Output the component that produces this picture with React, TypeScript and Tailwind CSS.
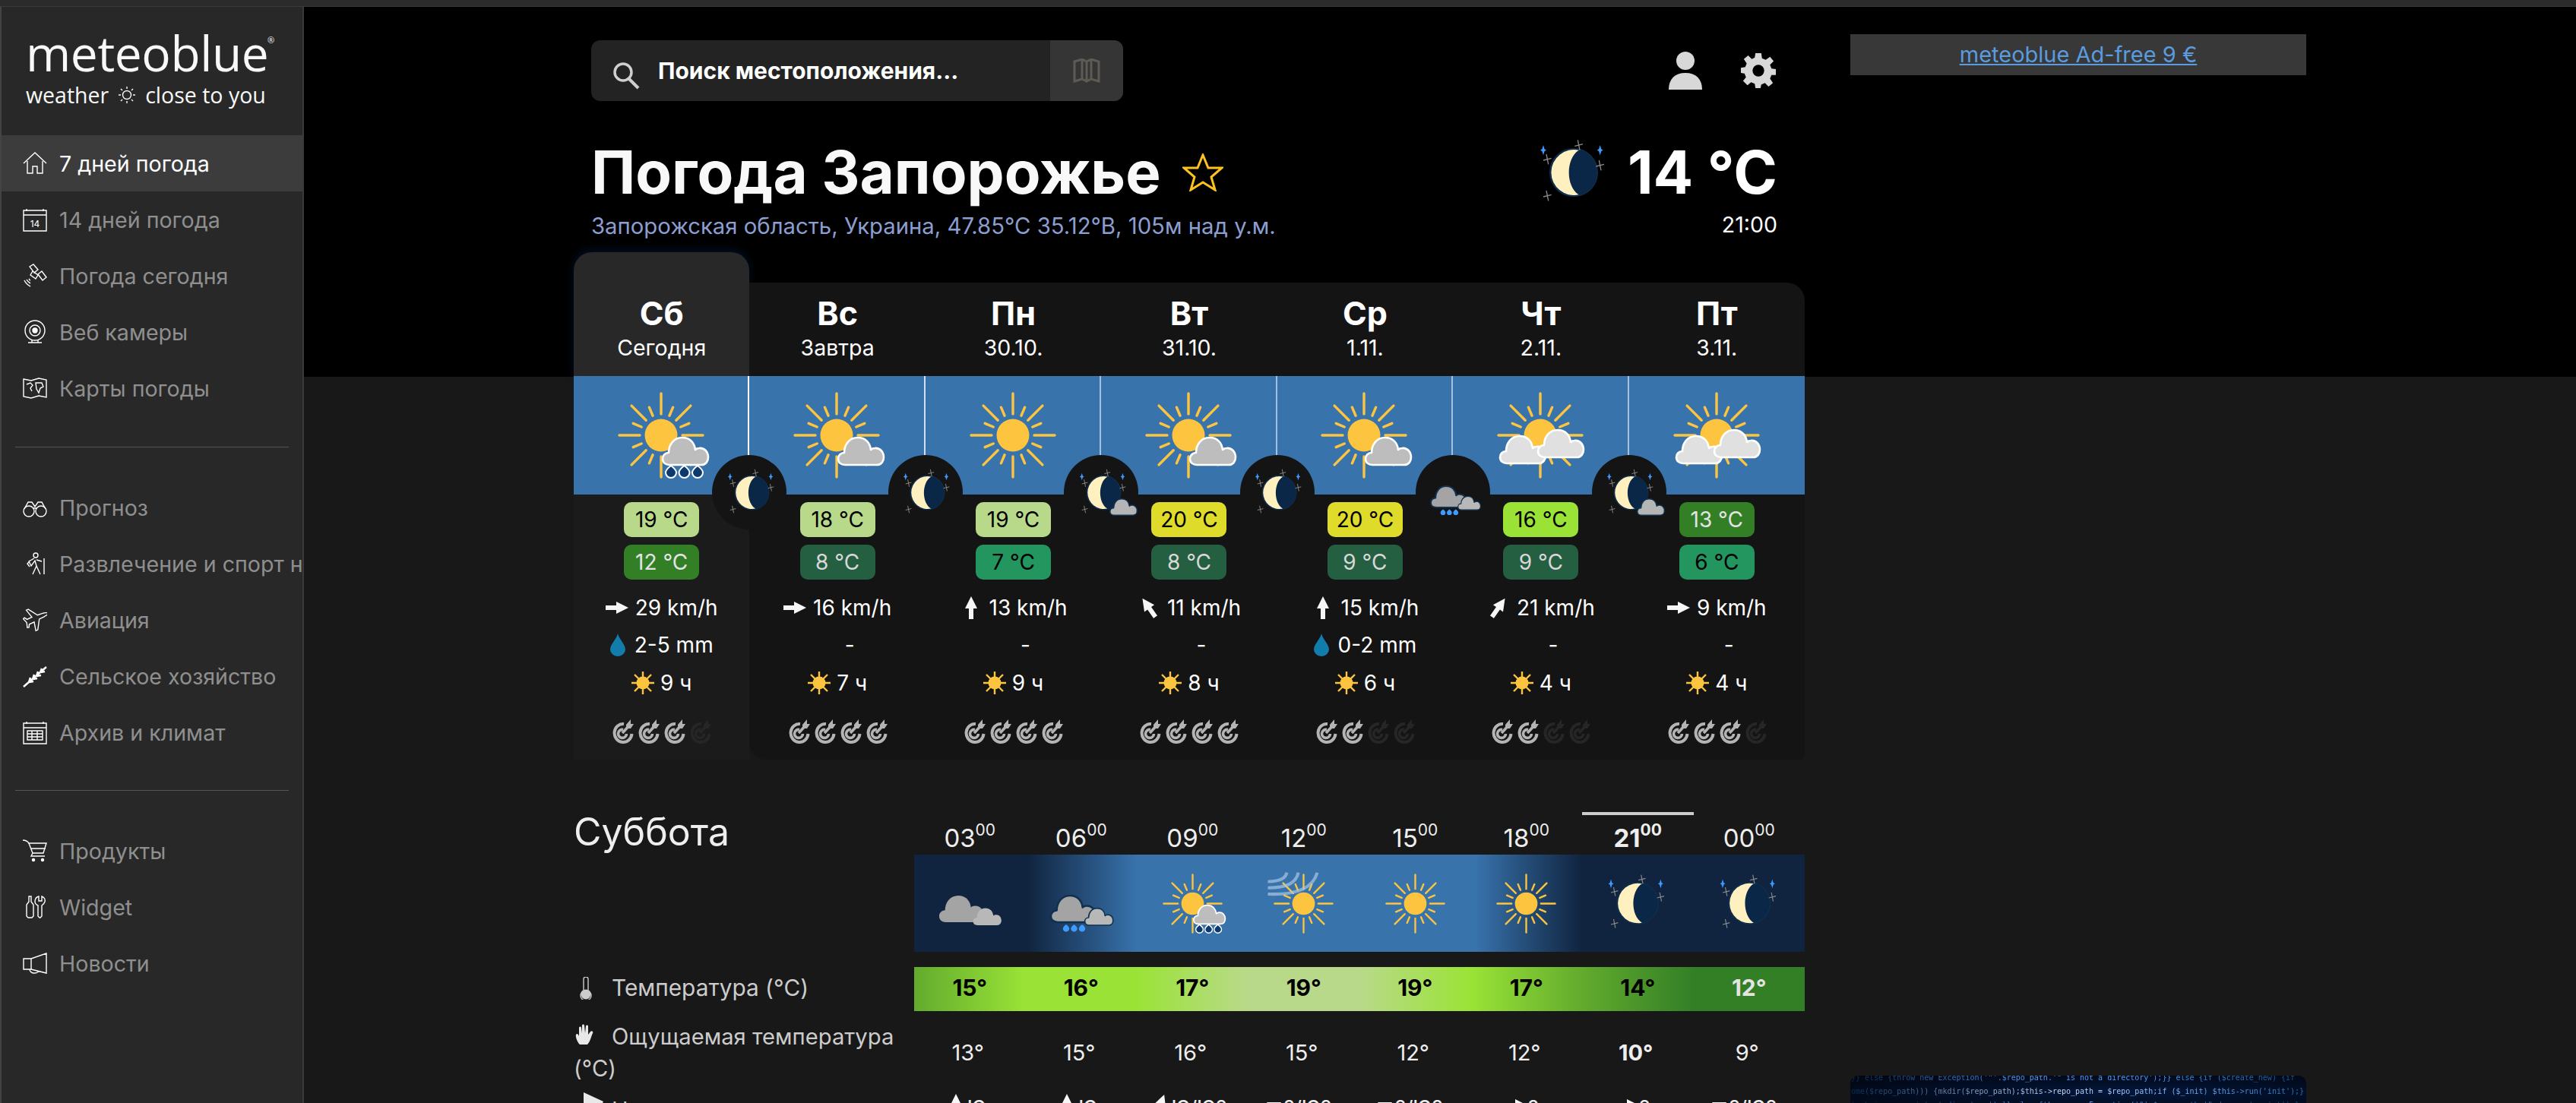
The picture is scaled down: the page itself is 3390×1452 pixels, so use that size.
import type { ReactNode } from 'react';

const FONT = "font-['Inter','Noto_Sans',sans-serif]";

// --- sidebar icons, thin white line drawings on a 32x32 box ---
const navIcons: Record<string, ReactNode> = {
  home: <path d="M1 16 16 2l15 14M6 13v16h7v-9h6v9h7V13" />,
  cal14: (
    <>
      <path d="M1 4h30v27H1zM1 10h30M5 2v3M27 2v3" />
      <text x="16" y="26" fontSize="12" textAnchor="middle" fill="#fff" stroke="none" fontFamily="Inter">14</text>
    </>
  ),
  satellite: <path d="M9 4l5-3 6 7-5 4zM20 14l5-4 6 8-5 4zM13 10l7 5-3 5-7-5zM2 22c2 4 4 6 8 8M5 21c1 2 3 4 5 5M8 20c1 1 1 2 2 2" />,
  webcam: (
    <>
      <circle cx="16" cy="14" r="13" />
      <circle cx="16" cy="14" r="7" />
      <circle cx="16" cy="14" r="3" fill="#fff" />
      <path d="M7 30h18M12 27v3M20 27v3" />
    </>
  ),
  map: <path d="M1 4l10 2 10-3 10 2v23l-10-2-10 3-10-2zM5 11l5-2 3 3-3 4 2 4M17 9l8 0 2 5-4 2-2 6-3-5z" />,
  binoculars: (
    <>
      <circle cx="8" cy="21" r="7" />
      <circle cx="24" cy="21" r="7" />
      <path d="M2 18 7 9h5l4 6 4-6h5l5 9M13 17h6" />
    </>
  ),
  hiker: (
    <>
      <circle cx="17" cy="5" r="3" />
      <path d="M15 9l-7 4 3 6 5-7 2 7-5 11M18 19l5 11M18 11l7 2M28 9v21M9 13l-3 3 3 4" />
    </>
  ),
  plane: <path d="M31 2c-3-1-7 1-9 3L17 9 3 6 1 8l10 6-5 5-4-1-1 2 6 3 3 6 2-1-1-4 5-5 6 10 2-2-3-14 5-5c2-3 5-6 5-8z" transform="rotate(20 16 16)" />,
  wheat: <path d="M1 30 31 4M8 24l2-6M8 24l6-1M13 20l2-6M13 20l6-1M18 16l2-6M18 16l6-1M23 11l2-5M23 11l6-1" strokeWidth="2.5" />,
  table: <path d="M1 4h30v27H1zM1 10h30M5 2v3M27 2v3M6 14h20v12H6zM6 18h20M6 22h20M12 14v12M19 14v12" />,
  cart: (
    <>
      <path d="M0 2c4 0 6 1 8 4l5 13h14l4-13H7M10 13h20M13 19l-2 4h18" />
      <circle cx="14" cy="28" r="1.5" fill="#fff" />
      <circle cx="26" cy="28" r="1.5" fill="#fff" />
    </>
  ),
  tools: <path d="M8 2h3v7l3 4v15l-2 2H7l-2-2V13l3-4zM21 2v6h4V2c3 1 5 4 4 7s-3 4-4 5v14l-2 2h-1l-2-2V14c-2-1-4-3-4-5s1-6 5-7z" />,
  megaphone: <path d="M1 10h10l20-7v26l-20-5H1zM11 10v14M9 24c0 3 3 5 6 5s5-1 6-3" />,
};

function NavIcon({ name }: { name: string }) {
  return (
    <svg viewBox="0 0 32 32" className="h-[32px] w-[32px] shrink-0" fill="none" stroke="#fff" strokeWidth="1.4">
      {navIcons[name]}
    </svg>
  );
}

function NavItem({ icon, label, active }: { icon: string; label: string; active?: boolean }) {
  return (
    <div
      className={`flex h-[74px] items-center gap-[16px] overflow-hidden whitespace-nowrap pl-[28px] text-[28.6px] ${
        active ? 'bg-[#3c3c3c] text-white' : 'text-[#8f8f8f]'
      }`}
    >
      <NavIcon name={icon} />
      <span className="pt-[2px]">{label}</span>
    </div>
  );
}

function Sidebar() {
  return (
    <aside className={`h-full w-[400px] shrink-0 overflow-hidden border-r-2 border-l-2 border-r-[#3a3a3a] border-l-[#444444] bg-[#282828] ${FONT}`}>
      <div className="relative h-[169px] pl-[32px] pt-[25px] font-['Open_Sans',sans-serif] text-[#f8f8f8]">
        <div className="text-[64px] font-medium leading-[71px] tracking-[-0.4px]">meteoblue</div>
        <span className="absolute left-[350px] top-[36px] text-[11px]">®</span>
        <div className="flex items-center whitespace-nowrap text-[28.5px] leading-[40px]">
          weather
          <svg viewBox="-12 -12 24 24" className="mx-[12px] h-[24px] w-[24px]" fill="none" stroke="#f8f8f8" strokeWidth="1.4">
            <circle r="5.5" />
            <path d="M0-11v3M0 8v3M-11 0h3M8 0h3M-8-8l2 2M6 6l2 2M-8 8l2-2M6-6l2-2" />
          </svg>
          close to you
        </div>
      </div>
      <NavItem icon="home" label="7 дней погода" active />
      <NavItem icon="cal14" label="14 дней погода" />
      <NavItem icon="satellite" label="Погода сегодня" />
      <NavItem icon="webcam" label="Веб камеры" />
      <NavItem icon="map" label="Карты погоды" />
      <div className="mx-[18px] mb-[42px] mt-[40px] h-px bg-[#555555]" />
      <NavItem icon="binoculars" label="Прогноз" />
      <NavItem icon="hiker" label="Развлечение и спорт на открытом воздухе" />
      <NavItem icon="plane" label="Авиация" />
      <NavItem icon="wheat" label="Сельское хозяйство" />
      <NavItem icon="table" label="Архив и климат" />
      <div className="mx-[18px] mb-[42px] mt-[39px] h-px bg-[#555555]" />
      <NavItem icon="cart" label="Продукты" />
      <NavItem icon="tools" label="Widget" />
      <NavItem icon="megaphone" label="Новости" />
    </aside>
  );
}

// --- weather pictograms, all on a -60..60 canvas ---
const CLOUD = 'M10 37H52C58 37 61 32 61 27C61 20 56 14 49 15C47 15 45 16 44 17C43 8 37 1 27 1C16 1 9 10 9 21C4 21 1 25 1 29C1 34 5 37 10 37Z';

function Sun() {
  const long = [0, 90, 180, 270];
  const diag = [45, 135, 225, 315];
  const short = [23, 67, 113, 157, 203, 247, 293, 337];
  return (
    <g stroke="#fdc53f" strokeWidth="3.4" strokeLinecap="round">
      {long.map((a) => (
        <line key={a} x1="0" y1="-28" x2="0" y2="-55" transform={`rotate(${a})`} />
      ))}
      {diag.map((a) => (
        <line key={a} x1="0" y1="-28" x2="0" y2="-55" transform={`rotate(${a})`} />
      ))}
      {short.map((a) => (
        <line key={a} x1="0" y1="-28" x2="0" y2="-40" transform={`rotate(${a})`} />
      ))}
      <circle r="21.5" fill="#fdc53f" stroke="none" />
    </g>
  );
}

function Cloud({ x, y, s = 1, fill = '#bdbdbd', stroke = '#fff' }: { x: number; y: number; s?: number; fill?: string; stroke?: string }) {
  return (
    <path
      d={CLOUD}
      transform={`translate(${x} ${y}) scale(${s})`}
      fill={fill}
      stroke={stroke}
      strokeWidth={stroke === 'none' ? 0 : 2.6}
      strokeLinejoin="round"
    />
  );
}

function Drops({ x, y, fill = '#0d3a6e', stroke = '#fff', s = 1 }: { x: number; y: number; fill?: string; stroke?: string; s?: number }) {
  return (
    <g transform={`translate(${x} ${y}) scale(${s})`} fill={fill} stroke={stroke} strokeWidth="2">
      {[0, 17.5, 35].map((dx) => (
        <path key={dx} d={`M${dx} 0C${dx + 4} 3 ${dx + 7} 6 ${dx + 7} 9A7 7 0 0 1 ${dx - 7} 9C${dx - 7} 6 ${dx - 4} 3 ${dx} 0Z`} />
      ))}
    </g>
  );
}

function Stars() {
  const gray = [
    [5, -27],
    [-26, -13],
    [26, -7],
    [-26, 23],
  ];
  const blue = [
    [-30, -22],
    [26, -22],
  ];
  return (
    <g>
      {gray.map(([x, y]) => (
        <path key={`${x}${y}`} d="M-1-5 1 5M-4 1 4-1" transform={`translate(${x} ${y})`} stroke="#8a8a8a" strokeWidth="1" />
      ))}
      {blue.map(([x, y]) => (
        <path key={`${x}${y}`} d="M0-5 1.2-1 3 0 1.2 1 0 5-1.2 1-3 0-1.2-1Z" transform={`translate(${x} ${y})`} fill="#3f9bff" />
      ))}
    </g>
  );
}

function Moon() {
  return (
    <g>
      <circle r="23.5" fill="#0a2747" stroke="#10304f" strokeWidth="1" />
      <path d="M5-22A22.5 22.5 0 1 0 5 22C-8 14-8-14 5-22Z" fill="#fff0c0" />
      <Stars />
    </g>
  );
}

type IconKind = 'sun' | 'sunCloud' | 'sunRain' | 'sunClouds' | 'sunWind' | 'moon' | 'moonCloud' | 'nightRain' | 'nightClouds' | 'nightCloudsRain';

function WeatherIcon({ kind, size }: { kind: IconKind; size: number }) {
  return (
    <svg viewBox="-60 -60 120 120" width={size} height={size} className="block overflow-visible">
      {kind.startsWith('sun') && <Sun />}
      {(kind === 'sunCloud' || kind === 'sunRain') && <Cloud x={1} y={2} />}
      {kind === 'sunRain' && <Drops x={13} y={40} />}
      {kind === 'sunClouds' && (
        <>
          <Cloud x={-54} y={0} fill="#e0e0e0" />
          <Cloud x={-4} y={-8} fill="#e0e0e0" />
        </>
      )}
      {kind === 'sunWind' && (
        <path d="M-68-42C-44-42-34-48-32-59M-68-30C-30-30-14-40-10-59M-68-18C-14-16 18-30 26-59" fill="none" stroke="#a9c6e2" strokeWidth="6" opacity="0.7" />
      )}
      {kind.startsWith('moon') && <Moon />}
      {kind === 'moonCloud' && <Cloud x={8} y={8} s={0.62} fill="#b5b5b5" stroke="#10304f" />}
      {kind.startsWith('night') && (
        <>
          <Cloud x={-41} y={-11} s={0.97} fill="#a4a4a4" stroke={kind === 'nightClouds' ? 'none' : '#10304f'} />
          <Cloud x={4} y={6} s={0.62} fill="#b8b8b8" stroke={kind === 'nightClouds' ? 'none' : '#10304f'} />
        </>
      )}
      {(kind === 'nightRain' || kind === 'nightCloudsRain') && <Drops x={-20} y={28} s={0.6} fill="#3f9bff" stroke="none" />}
    </svg>
  );
}

function Arrow({ angle }: { angle: number }) {
  return (
    <svg viewBox="0 0 30 30" className="h-[30px] w-[30px] shrink-0" style={{ transform: `rotate(${angle}deg)` }}>
      <path d="M15 0 23 16H18V30H12V16H7Z" fill="#f6f6f6" />
    </svg>
  );
}

function DropIcon({ hidden }: { hidden?: boolean }) {
  return (
    <svg viewBox="0 0 20 30" className={`h-[30px] w-[20px] shrink-0 ${hidden ? 'invisible' : ''}`}>
      <path d="M10 0C12 8 20 14 20 21A10 9 0 0 1 0 21C0 14 8 8 10 0Z" fill="#127cab" />
    </svg>
  );
}

function SmallSun() {
  return (
    <svg viewBox="-15 -15 30 30" className="h-[30px] w-[30px] shrink-0">
      <g stroke="#fdc53f" strokeWidth="2.4">
        <path d="M0-15V15M-15 0H15M-11-11 11 11M-11 11 11-11" />
      </g>
      <circle r="8.5" fill="#fdc53f" />
    </svg>
  );
}

function Predict({ on }: { on: boolean }) {
  const color = on ? '#b4b4b4' : '#262626';
  return (
    <svg viewBox="0 0 29 32" className="h-[32px] w-[29px]" fill="none" stroke={color}>
      <path d="M16 6A11.5 12 0 1 0 26.5 19" strokeWidth="4" />
      <path d="M15 13.5A5.5 5.5 0 1 0 19.5 19" strokeWidth="3.6" />
      <path d="M14 18 24 7" strokeWidth="3.6" />
      <path d="M19 7 25 0 25 6 29 6 25 12 19 12Z" fill={color} stroke="none" />
    </svg>
  );
}

interface Day {
  name: string;
  date: string;
  icon: IconKind;
  night: IconKind;
  sep: string;
  hi: [string, string, string];
  lo: [string, string, string];
  wind: number;
  speed: string;
  rain?: string;
  sun: string;
  pred: number;
}

const HI_19 = '#b9d98a';
const LO_8 = '#255f42';
const LO_7 = '#23955f';

const days: Day[] = [
  { name: 'Сб', date: 'Сегодня', icon: 'sunRain', night: 'moon', sep: 'border-r-white', hi: ['19 °C', HI_19, '#000'], lo: ['12 °C', '#337f26', '#e4e4e4'], wind: 90, speed: '29 km/h', rain: '2-5 mm', sun: '9 ч', pred: 3 },
  { name: 'Вс', date: 'Завтра', icon: 'sunCloud', night: 'moon', sep: 'border-r-[#d3dfec]', hi: ['18 °C', HI_19, '#000'], lo: ['8 °C', LO_8, '#d8d8d8'], wind: 90, speed: '16 km/h', sun: '7 ч', pred: 4 },
  { name: 'Пн', date: '30.10.', icon: 'sun', night: 'moonCloud', sep: 'border-r-[#a5c1e0]', hi: ['19 °C', HI_19, '#000'], lo: ['7 °C', LO_7, '#000'], wind: 0, speed: '13 km/h', sun: '9 ч', pred: 4 },
  { name: 'Вт', date: '31.10.', icon: 'sunCloud', night: 'moon', sep: 'border-r-[#a5c1e0]', hi: ['20 °C', '#dedb2b', '#000'], lo: ['8 °C', LO_8, '#d8d8d8'], wind: -35, speed: '11 km/h', sun: '8 ч', pred: 4 },
  { name: 'Ср', date: '1.11.', icon: 'sunCloud', night: 'nightRain', sep: 'border-r-[#a5c1e0]', hi: ['20 °C', '#dedb2b', '#000'], lo: ['9 °C', LO_8, '#d8d8d8'], wind: 0, speed: '15 km/h', rain: '0-2 mm', sun: '6 ч', pred: 2 },
  { name: 'Чт', date: '2.11.', icon: 'sunClouds', night: 'moonCloud', sep: 'border-r-[#a5c1e0]', hi: ['16 °C', '#9ae336', '#000'], lo: ['9 °C', LO_8, '#d8d8d8'], wind: 35, speed: '21 km/h', sun: '4 ч', pred: 2 },
  { name: 'Пт', date: '3.11.', icon: 'sunClouds', night: 'moon', sep: 'border-r-transparent', hi: ['13 °C', '#337f26', '#e4e4e4'], lo: ['6 °C', LO_7, '#000'], wind: 90, speed: '9 km/h', sun: '4 ч', pred: 3 },
];

function Badge({ t }: { t: [string, string, string] }) {
  return (
    <div className="flex h-[46px] w-[99px] items-center justify-center rounded-[10px] text-[28px]" style={{ backgroundColor: t[1], color: t[2] }}>
      {t[0]}
    </div>
  );
}

function DayColumn({ day, index }: { day: Day; index: number }) {
  const selected = index === 0;
  return (
    <div className="relative flex flex-col">
      <div
        className={`flex flex-col items-center text-white ${
          selected
            ? 'h-[163px] rounded-t-[24px] bg-[#282828] pt-[55px] shadow-[0_-3px_12px_rgba(0,50,110,0.35)]'
            : `mt-[40px] h-[123px] bg-[#141414] pt-[15px] ${index === 6 ? 'rounded-tr-[24px]' : ''}`
        }`}
      >
        <div className="text-[43px] font-bold leading-[50px]">{day.name}</div>
        <div className="mt-[1px] text-[28.5px] leading-[40px]">{day.date}</div>
      </div>
      <div className={`flex h-[156px] justify-center bg-[#3873ac] pt-[18px] ${index === 6 ? '' : 'border-r-2'} ${day.sep}`}>
        <WeatherIcon kind={day.icon} size={120} />
      </div>
      <div className={`flex h-[349px] flex-col items-center pt-[10px] text-white ${selected ? 'bg-[#1b1b1b]' : 'bg-[#141414]'} ${index === 1 ? 'rounded-bl-[24px]' : ''} ${index === 6 ? 'rounded-br-[6px]' : ''}`}>
        <div className="flex flex-col gap-[10px]">
          <Badge t={day.hi} />
          <Badge t={day.lo} />
        </div>
        <div className="mt-[13px] flex h-[48px] items-center gap-[9px] text-[28px]">
          <Arrow angle={day.wind} />
          <span>{day.speed}</span>
        </div>
        <div className="flex h-[50px] items-center gap-[12px] text-[28px]">
          <DropIcon hidden={!day.rain} />
          <span>{day.rain ?? '-'}</span>
        </div>
        <div className="flex h-[49px] items-center gap-[8px] text-[28px]">
          <SmallSun />
          <span>{day.sun}</span>
        </div>
        <div className="mt-[24px] flex gap-[5px]">
          {[0, 1, 2, 3].map((i) => (
            <Predict key={i} on={i < day.pred} />
          ))}
        </div>
      </div>
      {index < 6 && (
        <div className="absolute right-[-49px] top-[267px] z-10 flex h-[98px] w-[98px] items-center justify-center rounded-full bg-[#141414] pl-[6px]">
          <WeatherIcon kind={day.night} size={day.night === 'nightRain' ? 96 : 115} />
        </div>
      )}
    </div>
  );
}

const hours: { h: string; icon: IconKind; size: number; temp: string; dark?: boolean; feel: string; bold?: boolean; dir: string; angle?: number }[] = [
  { h: '03', icon: 'nightClouds', size: 120, temp: '15°', feel: '13°', dir: 'Ю', angle: 0 },
  { h: '06', icon: 'nightCloudsRain', size: 120, temp: '16°', feel: '15°', dir: 'Ю', angle: 0 },
  { h: '09', icon: 'sunRain', size: 83, temp: '17°', feel: '16°', dir: 'Ю/ЮЗ', angle: 20 },
  { h: '12', icon: 'sunWind', size: 83, temp: '19°', feel: '15°', dir: 'З/ЮЗ' },
  { h: '15', icon: 'sun', size: 83, temp: '19°', feel: '12°', dir: 'З/ЮЗ' },
  { h: '18', icon: 'sun', size: 83, temp: '17°', feel: '12°', dir: 'З', angle: 90 },
  { h: '21', icon: 'moon', size: 140, temp: '14°', feel: '10°', bold: true, dir: 'З', angle: 90 },
  { h: '00', icon: 'moon', size: 140, temp: '12°', dark: true, feel: '9°', dir: 'З/ЮЗ' },
];

function Hourly() {
  return (
    <section className="mt-[69px] grid grid-cols-[448px_1fr] text-[#eeeeee]">
      <h2 className="-mt-[4px] text-[50px] leading-[60px]">Суббота</h2>
      <div className="grid h-[54px] grid-cols-8">
        {hours.map((c) => (
          <div key={c.h} className={`flex justify-center border-t-4 pt-[9px] text-[33px] leading-[42px] ${c.bold ? 'border-t-[#cccccc] font-bold' : 'border-t-transparent'}`}>
            {c.h}
            <span className="mt-[-4px] text-[21px] leading-[30px]">00</span>
          </div>
        ))}
      </div>

      <div />
      <div className="grid h-[128px] grid-cols-8 grid-rows-[128px] items-center justify-items-center bg-[linear-gradient(90deg,#10243f_12.7%,#3873ac_25%,#3873ac_63%,#10243f_75%)]">
        {hours.map((c) => (
          <WeatherIcon key={c.h} kind={c.icon} size={c.size} />
        ))}
      </div>

      <div className="mt-[20px] flex h-[58px] items-center pb-[3px] text-[29.8px] text-[#cccccc]">
        <svg viewBox="0 0 16 30" className="ml-[8px] h-[30px] w-[16px]">
          <path d="M5 3a3 3 0 0 1 6 0v15a7 7 0 1 1-6 0z" fill="none" stroke="#cccccc" strokeWidth="1.4" />
          <circle cx="8" cy="23" r="6.5" fill="#cccccc" />
        </svg>
        <span className="ml-[26px]">Температура (°C)</span>
      </div>
      <div className="mt-[20px] grid h-[58px] grid-cols-8 items-center bg-[linear-gradient(90deg,#62ab2e_0%,#9ae336_12.5%,#9ae336_25%,#b9d98a_37.5%,#b9d98a_50%,#9ae336_62.5%,#62ab2e_75%,#337f26_87.5%,#337f26_100%)] pb-[4px]">
        {hours.map((c) => (
          <div key={c.h} className={`text-center text-[30px] font-bold ${c.dark ? 'text-[#e4e4e4]' : 'text-black'}`}>
            {c.temp}
          </div>
        ))}
      </div>

      <div className="h-[105px] pt-[13px] text-[29.2px] leading-[42px] text-[#cccccc]">
        <svg viewBox="0 0 26 30" className="ml-[2px] mr-[22px] inline-block h-[30px] w-[26px] align-[-2px]">
          <path d="M6 28C3 25 0 18 1 15c1-2 3-1 4 2V6c0-2 3-2 3 0l1 7V3c0-2 3-2 3 0l1 10 1-9c0-2 3-2 3 0v11l3-4c2-2 4 0 3 2-2 4-3 11-7 15z" fill="#e8e8e8" />
        </svg>
        Ощущаемая температура (°C)
      </div>
      <div className="grid h-[105px] grid-cols-8 items-center pt-[4px]">
        {hours.map((c) => (
          <div key={c.h} className={`pr-[5px] text-center text-[29px] ${c.bold ? 'font-bold' : ''}`}>
            {c.feel}
          </div>
        ))}
      </div>

      <div className="flex items-start text-[29px] leading-[36px] text-[#cccccc]">
        <svg viewBox="0 0 30 30" className="ml-[11px] h-[30px] w-[30px]">
          <path d="M2 2 28 14 20 30 2 22Z" fill="#e8e8e8" />
        </svg>
        <span className="ml-[9px] pt-[7px]">Направление ветра</span>
      </div>
      <div className="grid grid-cols-8">
        {hours.map((c) => (
          <div key={c.h} className="flex items-start justify-center pr-[12px] pt-[4px] text-[24px] font-medium leading-[30px]">
            {c.angle === undefined ? (
              <svg viewBox="0 0 19 16" className="mr-[3px] mt-[11px] h-[16px] w-[19px] shrink-0">
                <path d="M0 0H19L9.5 16Z" fill="#f6f6f6" />
              </svg>
            ) : (
              <Arrow angle={c.angle} />
            )}
            <span className="mt-[3px]">{c.dir}</span>
          </div>
        ))}
      </div>
    </section>
  );
}

function AdColumn() {
  return (
    <div className="flex w-[600px] shrink-0 flex-col justify-between pt-[36px]">
      <div className="flex h-[54px] items-center justify-center bg-[#383838]">
        <a href="#" className="text-[29px] text-[#5b9bdf] underline decoration-2 underline-offset-2">
          meteoblue Ad-free 9 €
        </a>
      </div>
      <div className="h-[36px] overflow-hidden rounded-t-[10px] bg-[radial-gradient(ellipse_at_60%_60%,#03163a,#01050f)] font-['DejaVu_Sans_Mono',monospace] text-[10px] leading-[18px] blur-[0.4px]">
        <div className="mt-[-6px] whitespace-nowrap bg-[linear-gradient(90deg,#0b2a4a,#5aa0ff_40%,#4f9cff_65%,#11507a)] bg-clip-text pl-[1px] text-transparent">
          {`}} else {throw new Exception('"'.$repo_path.'" is not a directory');}} else {if ($create_new) {if`}
        </div>
        <div className="whitespace-nowrap bg-[linear-gradient(90deg,#0b2a4a,#cfe2ff_45%,#8ab8ff_70%,#1f6fb0)] bg-clip-text pl-[1px] text-transparent">
          {`ome($repo_path))) {mkdir($repo_path);$this->repo_path = $repo_path;if ($_init) $this->run('init');}`}
        </div>
        <div className="whitespace-nowrap bg-[linear-gradient(90deg,#0b2a4a,#5aa0ff_50%,#11507a)] bg-clip-text pl-[1px] text-transparent">
          {`took in non-existent directory');}} else {throw new Exception('"'.$repo_path.'" does not exist');}`}
        </div>
      </div>
    </div>
  );
}

export default function App() {
  return (
    <div className={`flex h-[1452px] w-[3390px] flex-col overflow-hidden bg-black ${FONT}`}>
      <div className="h-[9px] shrink-0 border-b border-b-[#3a3a3a] bg-[#2b2b2b]" />
      <div className="flex min-h-0 flex-1">
        <Sidebar />
        <main className="flex min-w-0 flex-1 gap-[60px] bg-[linear-gradient(#000_487px,#181818_487px)] pl-[355px]">
          <div className="w-[1620px] shrink-0">
            <div className="flex items-start justify-between pl-[23px] pr-[38px] pt-[44px]">
              <div className="flex h-[80px] w-[700px] overflow-hidden rounded-[12px] bg-[#232323]">
                <div className="flex flex-1 items-center gap-[24px] pl-[28px]">
                  <svg viewBox="0 0 36 36" className="mt-[14px] h-[36px] w-[36px]" fill="none" stroke="#cfcfcf">
                    <circle cx="14" cy="13" r="11" strokeWidth="3.5" />
                    <path d="M22 22 34 34" strokeWidth="4" />
                  </svg>
                  <span className="text-[30px] font-bold text-white">Поиск местоположения...</span>
                </div>
                <div className="flex w-[96px] items-center justify-center bg-[#353535]">
                  <svg viewBox="0 0 36 32" className="h-[32px] w-[36px]" fill="none" stroke="#5f5a54" strokeWidth="3">
                    <path d="M2 4 12 1 18 4 24 1 34 4V30L24 27 18 30 12 27 2 30ZM12 1V27M24 1V27M18 4V30" />
                  </svg>
                </div>
              </div>
              <div className="flex items-center gap-[51px] pt-[15px]">
                <svg viewBox="0 0 44 50" className="h-[50px] w-[44px]" fill="#d8d8d8">
                  <ellipse cx="22" cy="12" rx="12" ry="12" />
                  <path d="M0 50C0 36 8 28 22 28S44 36 44 50Z" />
                </svg>
                <svg viewBox="-24 -24 48 48" className="h-[48px] w-[46px]" fill="#d8d8d8">
                  <path d="M-4-24H4L5-17 10-15 16-19 21-13 16-8 18-3 24-2V6L18 6 16 11 20 17 14 22 9 17 4 19 3 24H-4L-5 18-10 16-15 20-21 14-17 9-19 4-24 3V-4L-18-5-16-10-20-16-14-21-9-16-5-18Z" />
                  <circle r="8" fill="#000" />
                </svg>
              </div>
            </div>

            <div className="flex items-start justify-between pl-[23px] pr-[36px] pt-[46px]">
              <div>
                <div className="flex items-center gap-[28px]">
                  <h1 className="text-[78px] font-bold leading-[96px] text-[#f8f8f8]">Погода Запорожье</h1>
                  <svg viewBox="0 0 54 50" className="h-[50px] w-[54px]" fill="none" stroke="#fdc21f" strokeWidth="3">
                    <path d="M27 2 34 19 52 19 38 31 43 48 27 38 11 48 16 31 2 19 20 19Z" />
                  </svg>
                </div>
                <p className="mt-[3px] text-[29.3px] leading-[40px] text-[#8c9ed0]">
                  Запорожская область, Украина, 47.85°С 35.12°В, 105м над у.м.
                </p>
              </div>
              <div className="flex flex-col items-end">
                <div className="flex items-center">
                  <div className="mr-[-9px] -my-[40px]">
                    <WeatherIcon kind="moon" size={160} />
                  </div>
                  <span className="text-[78px] font-bold leading-[96px] text-white">14 °C</span>
                </div>
                <span className="mt-[1px] text-[28.5px] leading-[40px] text-white">21:00</span>
              </div>
            </div>

            <div className="mt-[14px] grid grid-cols-7">
              {days.map((d, i) => (
                <DayColumn key={d.name} day={d} index={i} />
              ))}
            </div>

            <Hourly />
          </div>
          <AdColumn />
        </main>
      </div>
    </div>
  );
}
